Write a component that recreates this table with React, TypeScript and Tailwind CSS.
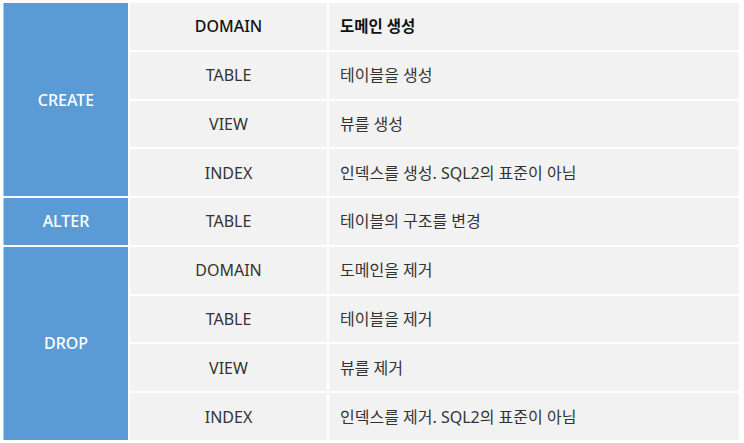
import React from "react";

const font = { fontFamily: '"Noto Sans", "Noto Sans CJK KR", sans-serif' };

type Row = { obj: string; desc: string };

const groups: { cmd: string; rows: Row[] }[] = [
  {
    cmd: "CREATE",
    rows: [
      { obj: "DOMAIN", desc: "도메인 생성" },
      { obj: "TABLE", desc: "테이블을 생성" },
      { obj: "VIEW", desc: "뷰를 생성" },
      { obj: "INDEX", desc: "인덱스를 생성. SQL2의 표준이 아님" },
    ],
  },
  { cmd: "ALTER", rows: [{ obj: "TABLE", desc: "테이블의 구조를 변경" }] },
  {
    cmd: "DROP",
    rows: [
      { obj: "DOMAIN", desc: "도메인을 제거" },
      { obj: "TABLE", desc: "테이블을 제거" },
      { obj: "VIEW", desc: "뷰를 제거" },
      { obj: "INDEX", desc: "인덱스를 제거. SQL2의 표준이 아님" },
    ],
  },
];

const spanClass: Record<number, string> = {
  1: "row-span-1",
  4: "row-span-4",
};

export default function App() {
  let first = true;
  return (
    <div className="w-[744px] h-[443px] bg-white pt-[3px] pl-[3px]" style={font}>
      <div className="grid grid-cols-[125px_197px_410px] grid-rows-9 gap-[2px] h-[437px] w-[736px]">
        {groups.map((g) => (
          <React.Fragment key={g.cmd}>
            <div
              className={`${spanClass[g.rows.length]} col-start-1 bg-[#5b9bd5] border-l border-[#a9cbeb] flex items-center justify-center text-white text-[16px] font-medium`}
            >
              {g.cmd}
            </div>
            {g.rows.map((r, i) => {
              const isHead = first;
              first = false;
              return (
                <React.Fragment key={g.cmd + i}>
                  <div
                    className={`col-start-2 bg-[#f2f2f2] flex items-center justify-center text-[16px] ${
                      isHead ? "text-[#111] font-medium" : "text-[#333]"
                    }`}
                  >
                    {r.obj}
                  </div>
                  <div
                    className={`col-start-3 bg-[#f2f2f2] flex items-center pl-[11px] ${
                      isHead ? "text-[#111] font-bold text-[15.5px]" : "text-[#333] text-[16px]"
                    }`}
                  >
                    {r.desc}
                  </div>
                </React.Fragment>
              );
            })}
          </React.Fragment>
        ))}
      </div>
    </div>
  );
}
